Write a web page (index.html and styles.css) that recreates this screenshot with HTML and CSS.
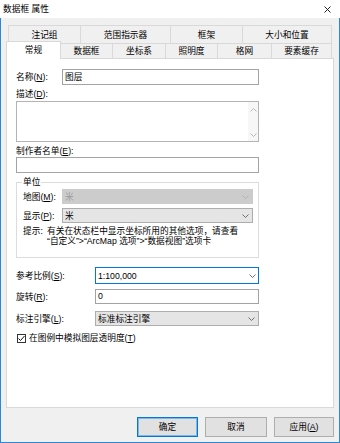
FILE: index.html
```html
<!DOCTYPE html>
<html lang="zh-CN">

<head>
  <meta charset="utf-8">
  <title>数据框 属性</title>
  <link rel="stylesheet" href="styles.css">
</head>

<body>
  <div class="window">
    <div class="titlebar">
      <span class="title">数据框 属性</span>
      <svg class="close" width="7" height="7" viewBox="0 0 7 7">
        <path d="M0.5 0.5L6.5 6.5M6.5 0.5L0.5 6.5" stroke="#111" stroke-width="0.9" fill="none" />
      </svg>
    </div>

    <div class="frame">
      <div class="tab-row tab-row-back">
        <div class="tab">注记组</div>
        <div class="tab">范围指示器</div>
        <div class="tab">框架</div>
        <div class="tab">大小和位置</div>
      </div>
      <div class="tab-row tab-row-front">
        <div class="tab tab-active">常规</div>
        <div class="tab">数据框</div>
        <div class="tab">坐标系</div>
        <div class="tab">照明度</div>
        <div class="tab">格网</div>
        <div class="tab">要素缓存</div>
      </div>

      <div class="panel">
        <div class="row row-name">
          <span class="label label-name">名称(<u>N</u>):</span>
          <div class="input">图层</div>
        </div>

        <div class="field-label">描述(<u>D</u>):</div>
        <div class="textarea">
          <div class="scroll">
            <svg width="7" height="4" viewBox="0 0 7 4"><polyline points="0.5,3.5 3.5,0.5 6.5,3.5" class="chev chev-light" /></svg>
            <svg width="7" height="4" viewBox="0 0 7 4"><polyline points="0.5,0.5 3.5,3.5 6.5,0.5" class="chev chev-light" /></svg>
          </div>
        </div>

        <div class="field-label">制作者名单(<u>E</u>):</div>
        <div class="input"></div>

        <fieldset class="group">
          <legend>单位</legend>
          <div class="row group-row">
            <span class="label label-group">地图(<u>M</u>):</span>
            <div class="select select-disabled">
              <span>米</span>
              <svg width="7" height="4" viewBox="0 0 7 4"><polyline points="0.5,0.5 3.5,3.5 6.5,0.5" class="chev chev-light" /></svg>
            </div>
          </div>
          <div class="row group-row group-row-next">
            <span class="label label-group">显示(<u>P</u>):</span>
            <div class="select">
              <span>米</span>
              <svg width="7" height="4" viewBox="0 0 7 4"><polyline points="0.5,0.5 3.5,3.5 6.5,0.5" class="chev" /></svg>
            </div>
          </div>
          <div class="hint">
            <span class="hint-key">提示:</span>
            <span class="hint-text">有关在状态栏中显示坐标所用的其他选项，请查看<br>“自定义”&gt;“ArcMap 选项”&gt;“数据视图”选项卡</span>
          </div>
        </fieldset>

        <div class="row row-scale">
          <span class="label label-wide">参考比例(<u>S</u>):</span>
          <div class="select select-combo">
            <span>1:100,000</span>
            <svg width="7" height="4" viewBox="0 0 7 4"><polyline points="0.5,0.5 3.5,3.5 6.5,0.5" class="chev" /></svg>
          </div>
        </div>
        <div class="row row-rotation">
          <span class="label label-wide">旋转(<u>R</u>):</span>
          <div class="input input-short">0</div>
        </div>
        <div class="row row-engine">
          <span class="label label-wide">标注引擎(<u>L</u>):</span>
          <div class="select select-wide">
            <span>标准标注引擎</span>
            <svg width="7" height="4" viewBox="0 0 7 4"><polyline points="0.5,0.5 3.5,3.5 6.5,0.5" class="chev" /></svg>
          </div>
        </div>

        <div class="row check-row">
          <span class="checkbox">
            <svg width="9" height="9" viewBox="0 0 9 9"><polyline points="1.5,4.5 3.5,6.5 7.5,2" fill="none" stroke="#111" stroke-width="1" /></svg>
          </span>
          <span class="check-label">在图例中模拟图层透明度(<u>T</u>)</span>
        </div>
      </div>

      <div class="buttons">
        <div class="button button-default">确定</div>
        <div class="button button-cancel">取消</div>
        <div class="button button-apply">应用(<u>A</u>)</div>
      </div>
    </div>
  </div>
</body>

</html>
```

FILE: styles.css
```css
* {
  box-sizing: border-box;
}

html, body {
  margin: 0;
  padding: 0;
}

body {
  width: 340px;
  height: 443px;
  font-family: "Liberation Sans", "Noto Sans CJK SC", sans-serif;
  font-size: 8.7px;
  color: #000;
  background: #fff;
}

u {
  text-decoration-thickness: 1px;
  text-underline-offset: 1px;
}

.window {
  display: flex;
  flex-direction: column;
  height: 443px;
}

.titlebar {
  display: flex;
  align-items: center;
  height: 18px;
  padding: 0 9px 0 3px;
  background: #fff;
}

.title {
  flex: 1;
  line-height: 12px;
}

.close {
  display: block;
  margin-top: 1px;
}

.frame {
  flex: 1;
  display: flex;
  flex-direction: column;
  padding: 7px 5px 5px 5px;
  background: #f0f0f0;
  border: 1px solid #2b88d8;
  border-top: 0;
}

/* tabs */

.tab-row {
  display: grid;
}

.tab-row-back {
  grid-template-columns: 72px 90px 72px 90px;
  grid-template-rows: 18px;
  margin-left: 2px;
}

.tab-row-front {
  grid-template-columns: 55px 52px 53px 52px 54px 60px;
  grid-template-rows: 15px;
  align-items: end;
}

.tab {
  display: flex;
  align-items: center;
  justify-content: center;
  height: 100%;
  background: #f0f0f0;
  border-top: 1px solid #d9d9d9;
  line-height: 12px;
}

.tab-row-back .tab {
  border-left: 1px solid #d9d9d9;
}

.tab-row-back .tab:last-child {
  border-right: 1px solid #d9d9d9;
}

.tab-row-front .tab {
  border-right: 1px solid #d9d9d9;
}

.tab-row-front .tab-active {
  height: 18px;
  margin-bottom: -1px;
  padding-bottom: 2px;
  background: #fff;
  border-left: 1px solid #d9d9d9;
  z-index: 1;
}

/* panel */

.panel {
  height: 350px;
  padding: 10px 74px 0 9px;
  background: #fff;
  border: 1px solid #d9d9d9;
}

.row {
  display: flex;
  align-items: center;
}

.label {
  flex: none;
  line-height: 12px;
}

.label-name {
  width: 46px;
}

.label-group {
  width: 39px;
}

.label-wide {
  width: 79px;
}

.row-name {
  height: 16px;
}

.input {
  flex: 1;
  height: 16px;
  padding-left: 2px;
  line-height: 14px;
  background: #fff;
  border: 1px solid #a3a3a3;
}

.field-label {
  margin-top: 3px;
  line-height: 12px;
}

.textarea {
  display: flex;
  justify-content: flex-end;
  height: 41px;
  margin-top: 1px;
  background: #fff;
  border: 1px solid #b4b4b4;
}

.scroll {
  display: flex;
  flex-direction: column;
  justify-content: space-between;
  align-items: center;
  width: 10px;
  padding: 6px 0 4px;
  background: #f7f7f7;
}

.scroll svg,
.select svg {
  display: block;
}

.chev {
  fill: none;
  stroke: #606060;
  stroke-width: 0.9;
}

.chev-light {
  stroke: #b0b0b0;
}

/* unit group */

.group {
  min-width: 0;
  margin: 3px 0 0;
  padding: 1px 5px 11px 6px;
  border: 1px solid #dcdcdc;
}

.group legend {
  margin-left: -1px;
  padding: 0 1px;
  line-height: 12px;
}

.group-row {
  height: 15px;
}

.group-row-next {
  margin-top: 4px;
}

.select {
  flex: 1;
  display: flex;
  align-items: center;
  justify-content: space-between;
  height: 100%;
  padding: 0 3px 0 2px;
  line-height: 12px;
  background: #e5e5e5;
  border: 1px solid #adadad;
}

.select-disabled {
  color: #9b9b9b;
  background: #cccccc;
  border-color: #cccccc;
}

.select-combo {
  padding-right: 2px;
  background: #fff;
  border-color: #0078d7;
}

.hint {
  display: flex;
  margin-top: 3px;
  line-height: 10px;
}

.hint-key {
  flex: none;
  width: 24px;
}

/* bottom fields */

.row-scale {
  height: 17px;
  margin-top: 9px;
}

.row-rotation {
  height: 15px;
  margin-top: 5px;
}

.row-rotation .input {
  height: 15px;
  line-height: 13px;
}

.row-engine {
  height: 15px;
  margin-top: 7px;
}

.check-row {
  height: 10px;
  margin-top: 7px;
}

.checkbox {
  flex: none;
  width: 9px;
  height: 9px;
  margin-left: 1px;
  background: #fff;
  border: 1px solid #333;
}

.checkbox svg {
  display: block;
  margin: -1px 0 0 -1px;
}

.check-label {
  margin-left: 3px;
  line-height: 12px;
}

/* buttons */

.buttons {
  display: flex;
  justify-content: flex-end;
  gap: 7px;
  margin-top: 9px;
}

.button {
  display: flex;
  align-items: center;
  justify-content: center;
  width: 60px;
  height: 20px;
  line-height: 12px;
  background: #e1e1e1;
  border: 1px solid #adadad;
}

.button-default {
  width: 61px;
  border-color: #0078d7;
  box-shadow: inset 0 0 0 1px #7fb7e6;
}

.button-cancel {
  width: 62px;
}
```
